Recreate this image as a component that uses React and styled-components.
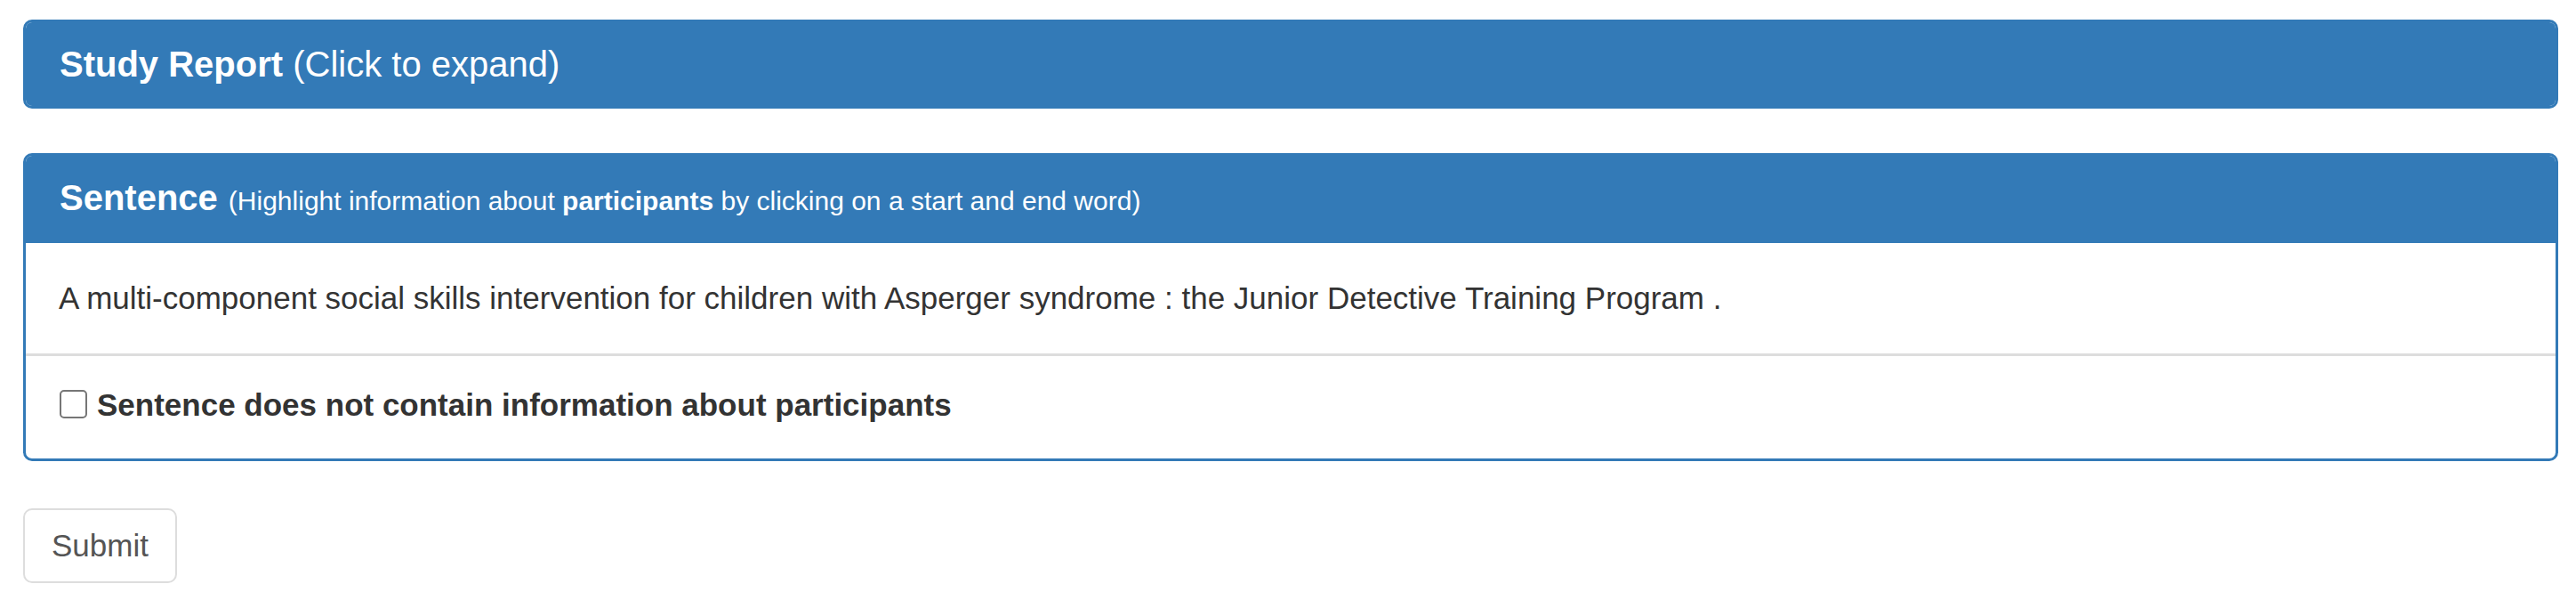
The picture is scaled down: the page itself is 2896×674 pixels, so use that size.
import React from 'react'
import styled, { createGlobalStyle } from 'styled-components'

const GlobalStyle = createGlobalStyle`
  html, body {
    margin: 0;
    padding: 0;
    background: #fff;
  }
  body {
    font-family: "Liberation Sans", Arial, Helvetica, sans-serif;
    color: #333;
  }
`

const Page = styled.div`
  padding: 22px 20px 40px 26px;
`

const Panel = styled.div`
  border: 3px solid #337ab7;
  border-radius: 10px;
  background: #fff;
  margin-bottom: 50px;
  overflow: hidden;
`

const PanelHeading = styled.div`
  background: #337ab7;
  color: #fff;
  padding: 25px 38px;
  font-size: 40px;
  line-height: 44px;
  cursor: ${(p) => (p.clickable ? 'pointer' : 'default')};
`

const Title = styled.span`
  font-weight: bold;
`

const Hint = styled.span`
  font-size: ${(p) => p.size || 40}px;
  font-weight: normal;
  margin-left: ${(p) => (p.size ? 12 : 0)}px;

  b {
    font-weight: bold;
  }
`

const PanelBody = styled.div`
  padding: 37px 37px 37px 37px;
  font-size: 35px;
  line-height: 50px;
  color: #333;
  border-top: ${(p) => (p.divided ? '3px solid #ddd' : 'none')};
  padding-top: ${(p) => (p.divided ? 30 : 37)}px;
  padding-bottom: ${(p) => (p.divided ? 35 : 37)}px;
`

const CheckLabel = styled.label`
  display: flex;
  align-items: center;
  font-weight: bold;
  font-size: 35px;
  line-height: 50px;
  color: #333;
`

const Box = styled.input`
  appearance: none;
  width: 31px;
  height: 32px;
  margin: 0 11px 0 1px;
  border: 2px solid #767676;
  border-radius: 5px;
  background: #fff;
  box-sizing: border-box;
  position: relative;
  top: -1px;
`

const SubmitButton = styled.button`
  font-family: "Liberation Sans", Arial, Helvetica, sans-serif;
  font-size: 35px;
  line-height: 50px;
  padding: 15px 30px;
  margin-top: 3px;
  border: 2px solid #ddd;
  border-radius: 10px;
  background: #fff;
  color: #555;
  cursor: pointer;
`

const App = () => {
  return (
    <Page>
      <GlobalStyle />
      <Panel>
        <PanelHeading clickable>
          <Title>Study Report</Title> <Hint>(Click to expand)</Hint>
        </PanelHeading>
      </Panel>

      <Panel>
        <PanelHeading>
          <Title>Sentence</Title>
          <Hint size={30}>
            (Highlight information about <b>participants</b> by clicking on a start and end word)
          </Hint>
        </PanelHeading>
        <PanelBody>
          A multi-component social skills intervention for children with Asperger syndrome : the Junior Detective Training Program .
        </PanelBody>
        <PanelBody divided>
          <CheckLabel>
            <Box type="checkbox" />
            Sentence does not contain information about participants
          </CheckLabel>
        </PanelBody>
      </Panel>

      <SubmitButton>Submit</SubmitButton>
    </Page>
  )
}

export default App
